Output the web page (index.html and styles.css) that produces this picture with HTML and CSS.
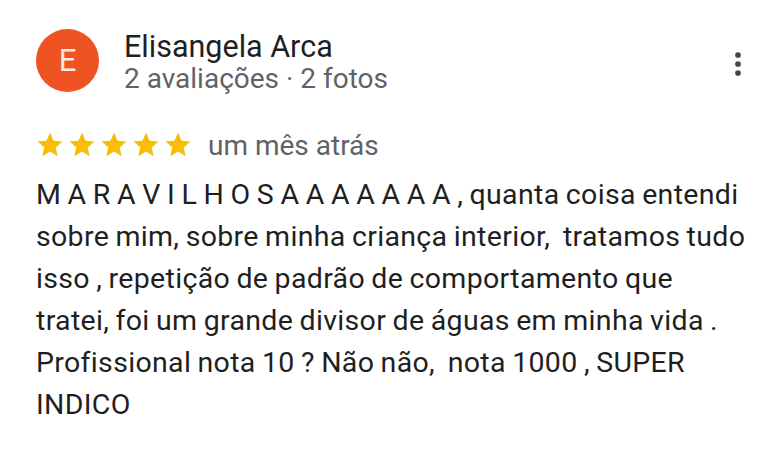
FILE: index.html
```html
<!DOCTYPE html>
<html lang="pt-BR">
<head>
<meta charset="utf-8">
<title>Avaliação</title>
<link rel="stylesheet" href="styles.css">
</head>
<body>
<div class="review">
  <div class="header">
    <div class="avatar">E</div>
    <div class="who">
      <div class="name">Elisangela Arca</div>
      <div class="meta">2 avaliações · 2 fotos</div>
    </div>
    <div class="more">
      <svg width="36" height="36" viewBox="0 0 24 24"><circle cx="12" cy="6" r="1.9" fill="#444746"/><circle cx="12" cy="12" r="1.9" fill="#444746"/><circle cx="12" cy="18" r="1.9" fill="#444746"/></svg>
    </div>
  </div>
  <div class="rating">
    <div class="stars">
      <svg class="star" viewBox="0 0 24 24"><path d="M12 17.27L18.18 21l-1.64-7.03L22 9.24l-7.19-.61L12 2 9.19 8.63 2 9.24l5.46 4.730L5.82 21z"/></svg>
      <svg class="star" viewBox="0 0 24 24"><path d="M12 17.27L18.18 21l-1.64-7.03L22 9.24l-7.19-.61L12 2 9.19 8.63 2 9.24l5.46 4.73L5.82 21z"/></svg>
      <svg class="star" viewBox="0 0 24 24"><path d="M12 17.27L18.18 21l-1.64-7.03L22 9.24l-7.19-.61L12 2 9.19 8.63 2 9.24l5.46 4.73L5.82 21z"/></svg>
      <svg class="star" viewBox="0 0 24 24"><path d="M12 17.27L18.18 21l-1.64-7.03L22 9.24l-7.19-.61L12 2 9.19 8.63 2 9.24l5.46 4.73L5.82 21z"/></svg>
      <svg class="star" viewBox="0 0 24 24"><path d="M12 17.27L18.18 21l-1.64-7.03L22 9.24l-7.19-.61L12 2 9.19 8.63 2 9.24l5.46 4.73L5.82 21z"/></svg>
    </div>
    <span class="date">um mês atrás</span>
  </div>
  <p class="text">M A R A V I L H O S A A A A A A A , quanta coisa entendi sobre mim, sobre minha criança interior,&nbsp; tratamos tudo isso , repetição de padrão de comportamento que tratei, foi um grande divisor de águas em minha vida . Profissional nota 10 ? Não não,&nbsp; nota 1000 , SUPER INDICO</p>
</div>
</body>
</html>
```

FILE: styles.css
```css
html, body {
  margin: 0;
  padding: 0;
  background: #ffffff;
}
body {
  font-family: Roboto, "Liberation Sans", Arial, sans-serif;
  color: #1f1f1f;
}
.review {
  width: 774px;
  height: 460px;
  box-sizing: border-box;
  padding: 29px 18px 0 36px;
}
.header {
  display: flex;
  align-items: flex-start;
}
.avatar {
  width: 63px;
  height: 63px;
  border-radius: 50%;
  background: #ef5323;
  color: #fde9e2;
  font-size: 31px;
  display: flex;
  align-items: center;
  justify-content: center;
  flex: none;
}
.who {
  margin-left: 25px;
  flex: 1;
}
.name {
  font-size: 30.5px;
  line-height: 36px;
  color: #1f1f1f;
}
.meta {
  font-size: 28px;
  line-height: 28px;
  color: #5f6368;
}
.more {
  margin-top: 17px;
  width: 36px;
  height: 36px;
}
.more svg { display: block; }
.rating {
  display: flex;
  align-items: center;
  margin-top: 35.6px;
}
.stars {
  display: flex;
  gap: 2px;
  margin-left: -1.5px;
}
.star {
  width: 30px;
  height: 30px;
  fill: #fbbc04;
  display: block;
}
.date {
  margin-left: 15.5px;
  font-size: 28px;
  color: #5f6368;
}
.text {
  margin: 12.4px 0 0 0;
  font-size: 28.5px;
  line-height: 42px;
  letter-spacing: 0.33px;
  word-spacing: -1.06px;
  color: #1f1f1f;
  width: 713.5px;
}
```
